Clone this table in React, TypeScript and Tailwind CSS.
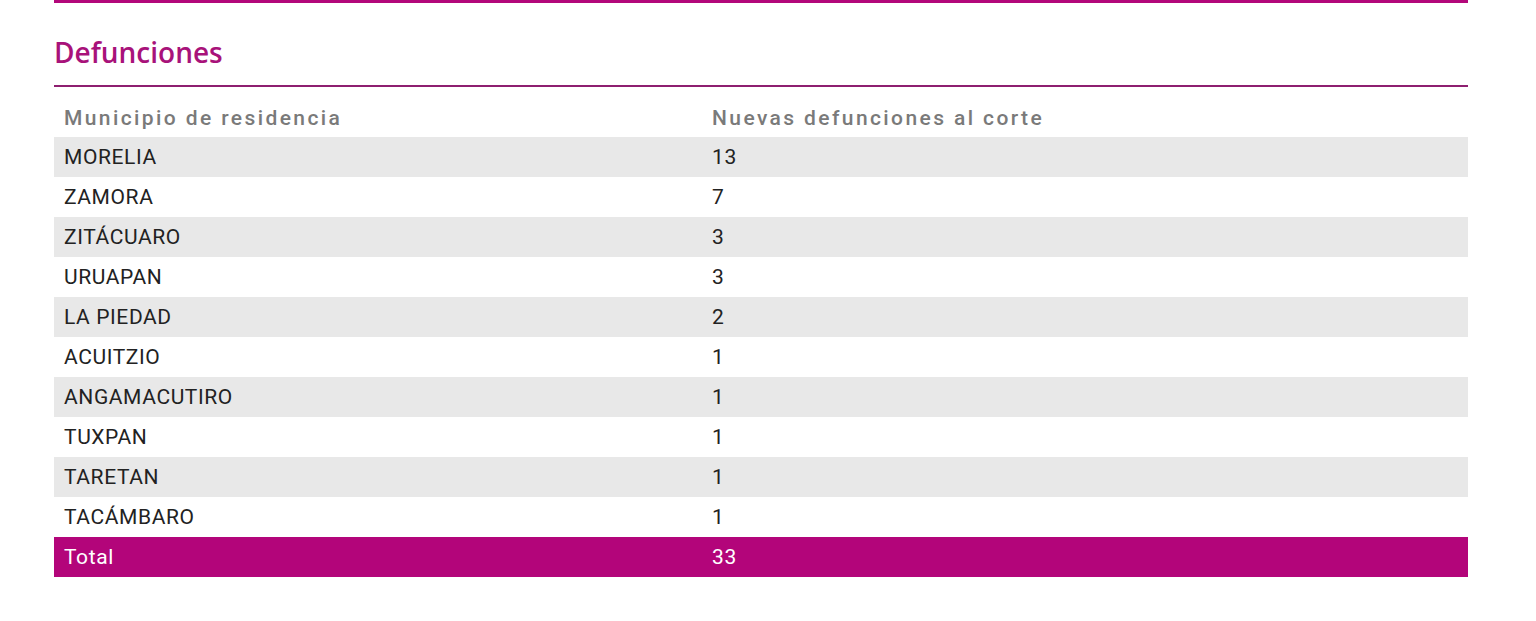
const rows: [string, string][] = [
  ["MORELIA", "13"],
  ["ZAMORA", "7"],
  ["ZITÁCUARO", "3"],
  ["URUAPAN", "3"],
  ["LA PIEDAD", "2"],
  ["ACUITZIO", "1"],
  ["ANGAMACUTIRO", "1"],
  ["TUXPAN", "1"],
  ["TARETAN", "1"],
  ["TACÁMBARO", "1"],
];

export default function App() {
  return (
    <main className="w-screen min-h-screen bg-white px-[54px] pr-[68px]">
      <div className="h-[3px] bg-[#b3077a]" />

      <h2 className="mt-[28px] mb-[12px] text-[28px] leading-[42px] font-semibold text-[#a8127a] font-['Open_Sans',sans-serif]">
        Defunciones
      </h2>
      <div className="h-[2px] bg-[#8e1f70]" />

      <div className="font-['Roboto',sans-serif] text-[21px]">
        {/* Header */}
        <div className="grid grid-cols-[648px_1fr] h-[50px] pt-[11px] leading-[40px] font-medium text-[#7a7a7a] tracking-[2.4px]">
          <div className="px-[10px]">Municipio de residencia</div>
          <div className="px-[10px]">Nuevas defunciones al corte</div>
        </div>

        {rows.map(([name, n], i) => (
          <div
            key={name}
            className={`grid grid-cols-[648px_1fr] h-[40px] leading-[40px] tracking-[0.6px] text-[#222222] ${
              i % 2 === 0 ? "bg-[#e8e8e8]" : "bg-white"
            }`}
          >
            <div className="px-[10px]">{name}</div>
            <div className="px-[10px]">{n}</div>
          </div>
        ))}

        <div className="grid grid-cols-[648px_1fr] h-[40px] leading-[40px] tracking-[0.6px] bg-[#b3057a] text-white">
          <div className="px-[10px]">Total</div>
          <div className="px-[10px]">33</div>
        </div>
      </div>
    </main>
  );
}
